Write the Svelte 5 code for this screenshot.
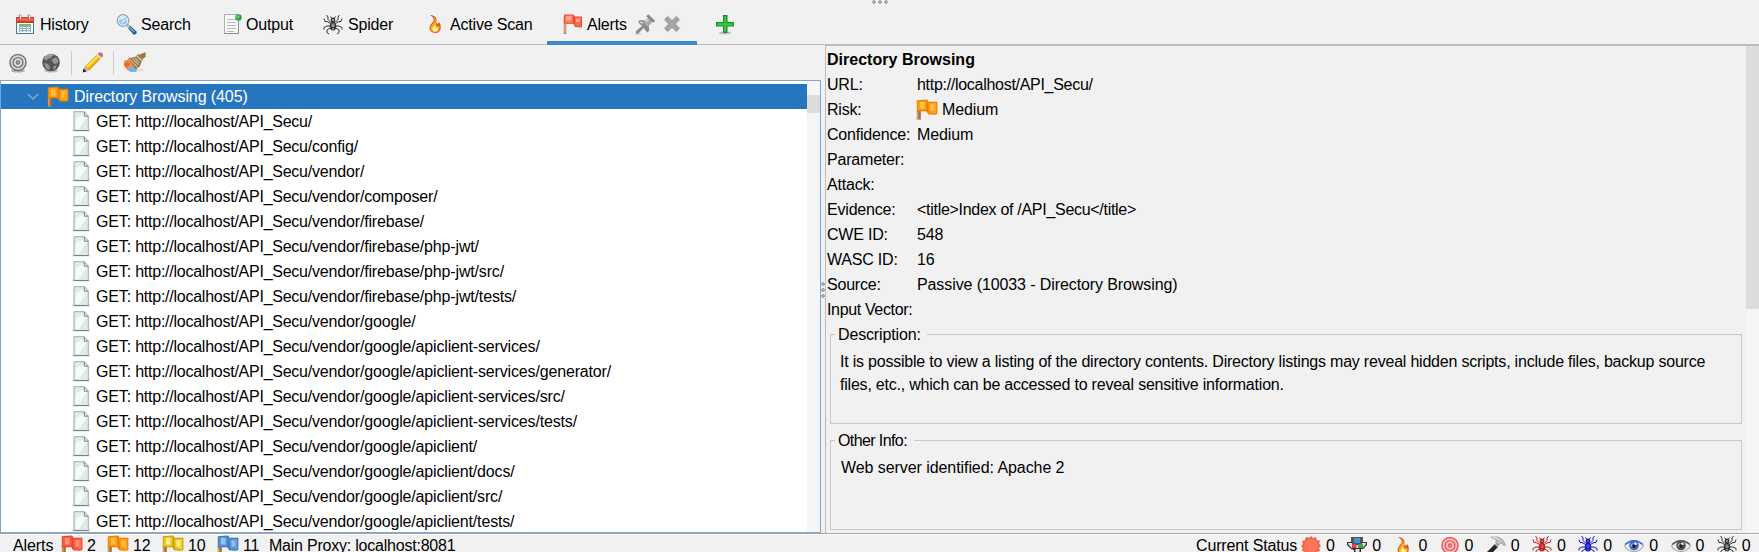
<script>
  const paths = ['', 'config/', 'vendor/', 'vendor/composer/', 'vendor/firebase/', 'vendor/firebase/php-jwt/',
    'vendor/firebase/php-jwt/src/', 'vendor/firebase/php-jwt/tests/', 'vendor/google/',
    'vendor/google/apiclient-services/', 'vendor/google/apiclient-services/generator/',
    'vendor/google/apiclient-services/src/', 'vendor/google/apiclient-services/tests/',
    'vendor/google/apiclient/', 'vendor/google/apiclient/docs/', 'vendor/google/apiclient/src/',
    'vendor/google/apiclient/tests/'];
  const fields = [['URL:', 'http://localhost/API_Secu/'], ['Risk:', 'Medium'], ['Confidence:', 'Medium'],
    ['Parameter:', ''], ['Attack:', ''], ['Evidence:', '<title>Index of /API_Secu</title>'],
    ['CWE ID:', '548'], ['WASC ID:', '16'], ['Source:', 'Passive (10033 - Directory Browsing)'], ['Input Vector:', '']];
  const tabs = [['calendar', 'History', 107], ['search', 'Search', 107], ['output', 'Output', 100], ['spider', 'Spider', 103], ['flame', 'Active Scan', 130]];
  const alertCounts = [['red', 2, 46], ['orange', 12, 55], ['yellow', 10, 55], ['blue', 11, 52]];
  const scans = [['burst'], ['network'], ['flame'], ['target', '#e6555a', '#ffc4c1'], ['hammer'], ['spider', '#b52222', '#e34a43'],
    ['spider', '#1818a8', '#3e50f5'], ['eye', '#3d68c9', '#8fb4ff'], ['eye', '#555', '#aaa'], ['spider', '#333', '#85888c']];
  const flags = { red: ['#ff5a40', '#ff967c', '#dc4630'], orange: ['#ff990d', '#ffc14d', '#e07f00'], yellow: ['#f0c51b', '#fff08a', '#bf9a10'], blue: ['#5592d6', '#93c0f0', '#3b76b8'] };
</script>

{#snippet flag(color)}
  {@const c = flags[color]}
  <svg class="icon flag" width="22" height="21" viewBox="0 0 22 21">
    <path d="M.8 11h4v9.6h-4z" fill="#a96f38" /><path d="M1.2 12h1.2v8.5H1.2z" fill="#d9ac78" />
    <path d="M.8 1.2 10.5.6q1.6.2 1.9 2.2h9v12.3l-3 .6-6.2-.4-1.8-3H.8z" fill={c[2]} />
    <path d="M1.6 2 10 1.5q.8 0 .8.8v8.9H1.6z" fill={c[0]} />
    <path d="M11.5 3.8h9v10.4l-2 .5-5.7-.4z" fill={c[0]} />
    <path d="M4 3h4.5v6.5H4zM14.5 5.2h3.3v6.5h-3.3z" fill={c[1]} />
    <path d="M10.6 3v9l1.9 2V4z" fill={c[2]} opacity=".5" />
    <path d="M19 4v10" stroke={c[1]} opacity=".7" />
  </svg>
{/snippet}

{#snippet icon(name, dark, light)}
  {#if name === 'calendar'}
    <svg class="icon" width="20" height="21" viewBox="0 0 20 21">
      <path d="M1 3h18v7H1z" fill="#db3823" /><path d="M2 4h16v3H2z" fill="#f26249" />
      <path d="M1 9h18v11H1z" fill="#3f79a7" /><path d="M2 9h16v10H2z" fill="#f9fcff" />
      <path d="M4 10h12v2H4z" fill="#61c667" /><path d="M4 12h12v6H4z" fill="#93a9bc" />
      <path d="M5 13h2v1H5zm3 0h3v1H8zm4 0h3v1h-3zm-7 2h2v1H5zm3 0h3v1H8zm4 0h3v1h-3zm-7 2h2v.7H5zm3 0h3v.7H8zm4 0h3v.7h-3z" fill="#fff" />
      <path d="M4 6V1.5q1.5-1.5 2 0V5m7 1V1.5q1.5-1.5 2 0V5" fill="none" stroke="#777" /><path d="M5.5 1v4m9-4v4" stroke="#eee" />
    </svg>
  {:else if name === 'search'}
    <svg class="icon" width="21" height="21" viewBox="0 0 21 21">
      <path d="m11.500 13.500 2.500-2 6.500 6q.8 2-1.500 3-1.500.3-2-.5z" fill="#23599b" /><path d="m13.500 13.500 5 4.500" stroke="#65a0dd" stroke-width="1.800" />
      <path d="m10.500 10.500 3 2.500" stroke="#c2bcb5" stroke-width="3" />
      <circle cx="7" cy="6.500" r="5.800" fill="#8ac3f6" stroke="#9ca2ab" stroke-width="1.200" /><circle cx="7" cy="6.500" r="4.700" fill="none" stroke="#f4f6fa" />
      <path d="M3.500 6q1-4 5-3l-3 3m0 3 5-4" stroke="#e3f4ff" stroke-width="1.200" fill="none" />
    </svg>
  {:else if name === 'output'}
    <svg class="icon" width="18" height="21" viewBox="0 0 18 21">
      <path d="M.5.5h14v19H.5z" fill="#f8f8f8" stroke="#b0b0b0" /><path d="M3 5.5h9M3 8.500h9m-9 3h9m-9 3h9m-9 3h7" stroke="#b8bbb8" />
      <path d="M14.500 6v13.500H.5" fill="none" stroke="#8d8d8d" />
      <circle cx="14.500" cy="3.400" r="3.200" fill="#319c3d" /><circle cx="14" cy="2.800" r="1.900" fill="#5ac75e" />
    </svg>
  {:else if name === 'spider'}
    <svg class="icon" width="20" height="21" viewBox="0 0 20 21">
      <g fill="none" stroke={dark} stroke-width="1">
        <path d="M8 8.500 5 5.500V3L3.500 1M7.500 9.500l-3.500-2H2L1 4.500M7.500 12H4l-3 1.500v2m7-2L4 16v2.500l2 1.500" />
        <path d="m12 8.500 3-3V3l1.500-2m-4 8.500 3.500-2h2l1-3M12.500 12H16l3 1.500v2m-7-2 4 2.500v2.500L14 20" />
        <path d="M8.500 4 7.500 2.500M11.500 4l1-1.500" />
      </g>
      <ellipse cx="10" cy="6" rx="2.400" ry="2.400" fill={dark} /><ellipse cx="10" cy="12" rx="3.200" ry="4.600" fill={dark} />
      <path d="M8.500 9.500h3v3.500h-3zm.5 4.500h2v1.500H9zM9 5h2v2H9z" fill={light} />
    </svg>
  {:else if name === 'flame'}
    <svg class="icon" width="14" height="20" viewBox="0 0 14 20">
      <path d="M2 1q4.500.3 6 3 1 2 .2 4.500L10 10l1-2q2 2 1.800 5Q12.500 19 7 19q-5-.5-5.500-5Q1.500 11 4 9q3-3 1-5.500Q4 2 2 1" fill="#dd5418" />
      <path d="M5.500 3q2.500 3-.5 6.500-2.500 2-2.300 5Q3.500 18.300 7 18.300q4.300-.3 4.800-4.800l-1.300-2-1.500 1Q7.500 9 7.800 6.500 7.500 4 5.500 3" fill="#ffae15" />
      <path d="M7 11q-3 2.500-2.300 5Q6 18 8 17.500q2.500-1 2-4l-1.500 1z" fill="#fff19d" />
    </svg>
  {:else if name === 'target'}
    <svg class="icon" width="20" height="20" viewBox="0 0 20 20">
      <ellipse cx="10" cy="17.600" rx="7" ry="2" fill={dark} opacity=".55" />
      <circle cx="10" cy="9.500" r="8" fill={light} stroke={dark} stroke-width="1.500" />
      <circle cx="10" cy="9.500" r="4.900" fill="none" stroke={dark} stroke-width="1.400" /><circle cx="10" cy="9.500" r="2.200" fill={dark} /><circle cx="10" cy="9.500" r=".8" fill={light} />
    </svg>
  {:else if name === 'burst'}
    <svg class="icon" width="20" height="20" viewBox="0 0 20 20">
      <path d="m10 0 2 2 3-1 .7 3 3.300.8-.8 3L20 10l-2 2 1 3-3 .7-1 3-3-.7-2 2-2-2-3 .8-.8-3L1 15l.8-3L0 10l2-2-1-3 3-.8L5 1l3 1z" fill="#f0624a" />
      <circle cx="10" cy="10" r="7" fill="#ff765a" />
    </svg>
  {:else if name === 'network'}
    <svg class="icon" width="20" height="20" viewBox="0 0 20 20">
      <path d="M4 1h12v8H4z" fill="#555" /><path d="M0 6h5v2h10V6h5v3l-4 4h-2v7H7v-6L4 13 0 9z" fill="#333" />
      <path d="M1 7h4v2h10V7h4v1l-3.500 4h-11L1 8z" fill="#ddd" /><path d="M7 2h6v5H7z" fill="#3799e1" /><path d="M5 8h4.500v4H5z" fill="#e43f51" /><path d="M11 8h5v4h-5z" fill="#45a641" /><path d="M8.500 13h4v7h-4z" fill="#e2e2e2" />
    </svg>
  {:else if name === 'hammer'}
    <svg class="icon" width="20" height="20" viewBox="0 0 20 20">
      <path d="M9 8 0 17l3 3L12 11z" fill="#252525" /><path d="m8.500 8.500 3 3 2-3-2.500-2z" fill="#aaa" />
      <path d="M5 1h7l5 3 2.500 5-1.500.5L15 7l-3 2-2.500-3 1-2z" fill="#bcbcbc" stroke="#888" stroke-width=".6" /><path d="m7 1.500 5 1 3 3" fill="none" stroke="#eee" />
    </svg>
  {:else if name === 'eye'}
    <svg class="icon" width="20" height="18" viewBox="0 0 20 18">
      <path d="M.5 9Q4 3.500 10 3.500T19.500 9Q16 14.500 10 14.500T.5 9" fill="#eee" stroke="#aaa" stroke-width="1.200" />
      <path d="M1 7.500q9-7.500 18 0" fill="none" stroke={dark} stroke-width="1.300" /><circle cx="10" cy="8.500" r="4.800" fill={dark} />
      <path d="M6.500 8q1-2 3-2v4q-2 1-3-2" fill={light} /><circle cx="10" cy="9" r="1.900" fill="#222" /><circle cx="11.500" cy="6.700" r="1.200" fill="#fff" />
    </svg>
  {/if}
{/snippet}

<div class="app">
  <nav>
    <i class="grip across"></i>
    {#each tabs as [name, label, width]}
      <div class="tab" style:width="{width}px"><span class="slot {name}">{@render icon(name, '#333', '#999')}</span>{label}</div>
    {/each}
    <div class="tab active">
      <svg width="20" height="21" viewBox="0 0 20 21">
        <path d="M2 2v18" stroke="#a77738" stroke-width="2.500" /><path d="M2 2v17" stroke="#ecd3a6" />
        <path d="M1 .6h9.500l1.500 2h7v11l-7-.5-1.500-3H1z" fill="#e5513a" /><path d="M2 1.500h8V9.500H2z" fill="#ff7857" /><path d="M12 3.500h6v9l-6-.6z" fill="#ff684a" />
        <path d="m3 2.500 5-.3V6L3 6.500zM13 5l4-.5v3l-4 .7z" fill="#ffaa92" /><path d="m10 2 2 2v7.500l-2-2z" fill="#e04a33" />
      </svg><span>Alerts</span>
      <svg class="pin" width="21" height="21" viewBox="0 0 21 21">
        <path d="M1 20v-3l6-5-4-4 2-2 5.500.5L13 4l-2-2 2.500-1.500L20 6.500l-1 2-3-.5-2.500 3 .8 5.500-2 2L8.500 14 3 20z" fill="#8b8b8b" /><path d="m8 8 5 5 4-5-3-3z" fill="#a8a8a8" /><path d="m10.500 8 3-2.500M5 8l3 1" stroke="#d8d8d8" stroke-width="1.500" /><path d="M0 20h6" stroke="#c8c8c8" />
      </svg>
      <svg class="close" width="20" height="20" viewBox="0 0 20 20"><path d="m4 4 12 12M16 4 4 16" stroke="#cfcfcf" stroke-width="6.500" /><path d="m4 4 12 12M16 4 4 16" stroke="#959595" stroke-width="4.300" /><path d="m5 5 10 10M15 5 5 15" stroke="#ababab" stroke-width="2" /></svg>
    </div>
    <svg class="plus" width="20" height="22" viewBox="0 0 20 22"><ellipse cx="10" cy="19" rx="6" ry="1.500" fill="#bbb" /><path d="M8 1h4.500v7H19v4.500h-6.500V19H8v-6.500H1V8h7z" fill="#159225" /><path d="M9.200 2.200h2v7h6.600v2.200h-6.600v6.400h-2v-6.400h-7V9.200h7z" fill="#42c849" /></svg>
  </nav>

  <main>
    <section class="left">
      <div class="toolbar">
        <span class="scope">{@render icon('target', '#777', '#dadada')}</span>
        <svg class="globe" width="20" height="20" viewBox="0 0 20 20"><ellipse cx="10" cy="17.500" rx="7" ry="2" fill="#bbb" /><circle cx="10" cy="9.500" r="8.800" fill="#555" /><path d="m5 3 4-1.500 3 1-2 2.500-3 1-2 2-2-2zM10.500 7l4-3 3 3-.5 3-4 1zM3 10l4 1 2 3-1 3-3-1.500zM13 13l3-1-2 4-2 .5z" fill="#949494" /><path d="M3.500 5q4-5 9-2.500" fill="none" stroke="#bbb" /></svg>
        <b></b>
        <svg class="pencil" width="22" height="22" viewBox="0 0 22 22"><path d="M1 20 3 14.500 15.500 2l2.500-1.500q3 0 3 3.500L7.500 18z" fill="#a87c14" /><path d="m3.500 14.500 12-12 3 3-12 12z" fill="#ffda32" /><path d="m5.500 16.500 12.500-12 1.500 1L7 18z" fill="#e5ac13" /><path d="m16 1.700 2-1.200q3 0 3 3.500L19.500 5.500z" fill="#d9706c" /><path d="m14.800 2.500 4.500 4" stroke="#ddd" stroke-width="1.800" /><path d="m3 14.500 4 3.500-5 1.500z" fill="#f4a88c" /><path d="m1.500 16.500 3.200 3-4 1z" fill="#222" /></svg>
        <b></b>
        <svg class="broom" width="23" height="22" viewBox="0 0 23 22"><ellipse cx="12" cy="18" rx="9" ry="1.500" fill="#ddd" /><path d="m1 9 6-2 6 8-3 4-5-.5L1 14z" fill="#f58a3d" /><path d="m5 16 5-2 4 4-1 2H7z" fill="#78b2e0" /><path d="m1 12 4-2 2 3-4 2z" fill="#ed5c40" /><path d="m5 6.500 7-1.500L15.500 2 20 7l-2 4-1 3-4 3.500z" fill="#8d6c39" /><path d="m6.500 7 8 8.500m-5-9 6 6.500m-3.500-7 4.500 5" stroke="#d0b67f" stroke-width="1.500" /><path d="m13.500 3.500 5.500 5.500" stroke="#b8c0c5" stroke-width="1.800" /><path d="m16.500 2.500 4-1.500L22.500 0v5l-3 2z" fill="#a5713d" /></svg>
      </div>
      <div class="tree">
        <div class="nodes">
          <div class="parent"><svg class="chevron" width="12" height="8" viewBox="0 0 12 8"><path d="m.8 1 5.200 5 5.200-5" fill="none" stroke="#93a6bb" stroke-width="1.400" /></svg>{@render flag('orange')}<span>Directory Browsing (405)</span></div>
          {#each paths as path}
            <div class="leaf"><svg width="19" height="21" viewBox="0 0 19 21"><path d="M0 19.500h18" stroke="#d8dcdb" stroke-width="2" /><path d="M2 .7h10.500L16.300 5v14.500H2z" fill="#dfebea" stroke="#9baeac" /><path d="M4 7 12 3l3 3-8 12H3z" fill="#f6fafa" /><path d="M12.300 1v4.200h4M2 19.500h14.500" fill="none" stroke="#718482" /></svg><span>GET: <em>http://localhost/API_Secu/</em>{path}</span></div>
          {/each}
        </div>
        <div class="scroll"><i></i></div>
      </div>
    </section>
    <div class="divider"><i class="grip"></i></div>
    <section class="details">
      <div class="body">
        <h1>Directory Browsing</h1>
        <dl>
          {#each fields as [label, value]}
            <dt>{label}</dt><dd class:tight={value.includes('API_Secu')}>{#if label === 'Risk:'}{@render flag('orange')}{/if}{value}</dd>
          {/each}
        </dl>
        <fieldset><legend>Description:</legend><p>It is possible to view a listing of the directory contents. Directory listings may reveal hidden scripts, include files, backup source files, etc., which can be accessed to reveal sensitive information.</p></fieldset>
        <fieldset class="other"><legend>Other Info:</legend><p>Web server identified: Apache 2</p></fieldset>
      </div>
      <div class="scroll"><i></i></div>
    </section>
  </main>

  <footer>
    <span class="label">Alerts</span>
    {#each alertCounts as [color, count, width]}<div class="count" style:width="{width}px">{@render flag(color)}<span>{count}</span></div>{/each}
    <span class="proxy">Main Proxy: localhost:8081</span>
    <span class="status">Current Status</span>
    {#each scans as [name, dark, light]}<div class="scan"><span class="slot">{@render icon(name, dark, light)}</span>0</div>{/each}
  </footer>
</div>

<style>
  :global(body) { margin: 0; overflow: hidden; }
  .app { width: 1759px; height: 552px; display: flex; flex-direction: column; overflow: hidden; box-sizing: border-box; background: #f1f1f1; color: #000; font: 16px/25px "Liberation Sans", Arial, sans-serif; letter-spacing: -.1px; white-space: nowrap; }
  svg { display: block; flex: none; }
  nav { position: relative; height: 44px; flex: none; display: flex; border-bottom: 1px solid #bdbdbd; padding-left: 15px; }
  .tab { display: flex; align-items: center; height: 48px; flex: none; letter-spacing: -.18px; }
  .tab .slot { width: 25px; display: flex; }
  .tab .slot.search { margin-left: -6px; }
  .tab .slot.output { width: 22px; margin-left: -5px; }
  .tab .slot.spider { margin-left: -6px; }
  .tab .slot.flame { margin-left: -4px; width: 22px; }
  .tab.active { width: 134px; height: 45px; padding-left: 16px; margin-left: -15px; box-shadow: inset 0 -4px #3d87cb; }
  .tab.active > * { margin-top: 3px; }
  .tab.active span { margin-left: 4px; width: 48px; }
  .tab.active .close { margin-left: 6px; }
  .plus { margin: 14px 0 0 18px; }
  .grip { position: absolute; width: 4px; height: 16px; background: radial-gradient(circle, #aaa 1.6px, transparent 2.1px) 0 0 / 4px 6px; }
  .grip.across { width: 18px; height: 4px; left: 871px; top: 0; background-size: 6px 4px; }
  main { height: 488px; flex: none; display: flex; }
  .left { width: 821px; flex: none; }
  .toolbar { height: 35px; display: flex; align-items: center; padding-left: 8px; box-sizing: border-box; }
  .toolbar b { width: 1px; height: 24px; background: #ccc; }
  .globe { margin-left: 13px; }
  .toolbar .globe + b { margin-left: 10px; }
  .pencil { margin: 0 9px 0 10px; }
  .broom { margin-left: 9px; }
  .tree { display: flex; height: 453px; border: 1px solid #7da7d3; box-sizing: border-box; background: #fff; overflow: hidden; }
  .nodes { width: 806px; padding-top: 3px; }
  .parent { height: 25px; display: flex; align-items: center; background: #2675bf; color: #fff; padding-left: 26px; }
  .parent span { margin-left: 5px; }
  .chevron { margin-right: 8px; }
  .leaf { height: 25px; display: flex; align-items: center; padding-left: 71px; letter-spacing: -.16px; }
  .leaf span { margin-left: 5px; }
  .leaf em { font-style: normal; letter-spacing: -.25px; }
  .scroll { width: 13px; background: #f5f5f5; }
  .scroll i { display: block; width: 13px; height: 18px; margin-top: 14px; background: #dcdcdc; }
  .divider { width: 4px; position: relative; }
  .divider .grip { left: 0; top: 236px; height: 18px; }
  .details { width: 934px; box-sizing: border-box; border-left: 1px solid #bdbdbd; border-top: 1px solid #bdbdbd; display: flex; overflow: hidden; }
  .body { width: 920px; padding: 1px 0 0 1px; box-sizing: border-box; }
  h1 { margin: 0; font-size: 16px; line-height: 25px; letter-spacing: .02px; }
  dl { margin: 0; display: grid; grid-template-columns: 90px 1fr; grid-auto-rows: 25px; }
  dt { letter-spacing: -.2px; }
  dt:last-of-type { letter-spacing: -.35px; }
  dd { margin: 0; display: flex; align-items: center; }
  dd.tight { letter-spacing: -.29px; }
  dd :global(.flag) { margin-left: -1px; margin-right: 4px; }
  .details .scroll i { height: 263px; margin: 0; }
  fieldset { margin: 0 4px 4px 3px; height: 102px; border: 1px solid #c9c9c9; padding: 0 9px; box-sizing: border-box; min-width: 0; }
  legend { padding: 0 6px 0 3px; margin-left: -5px; height: 25px; letter-spacing: -.15px; }
  .other legend { letter-spacing: -.6px; padding-right: 7px; }
  p { margin: 3px 0 0; line-height: 23px; white-space: normal; width: 890px; letter-spacing: -.213px; }
  .other p { letter-spacing: -.07px; padding-left: 1px; }
  footer { height: 19px; display: flex; align-items: center; border-top: 1px solid #a5a5a5; box-shadow: inset 0 1px #fff; padding-left: 13px; box-sizing: border-box; line-height: 25px; }
  footer > * { flex: none; margin-top: 5px; }
  .label { width: 48px; }
  .count { display: flex; align-items: center; }
  .count span { margin-left: 4px; }
  .proxy { width: 927px; letter-spacing: -.22px; }
  .status { width: 105px; letter-spacing: -.14px; }
  .scan { width: 46.2px; display: flex; align-items: center; }
  .scan .slot { width: 20px; display: flex; justify-content: center; margin-right: 5px; }
</style>
